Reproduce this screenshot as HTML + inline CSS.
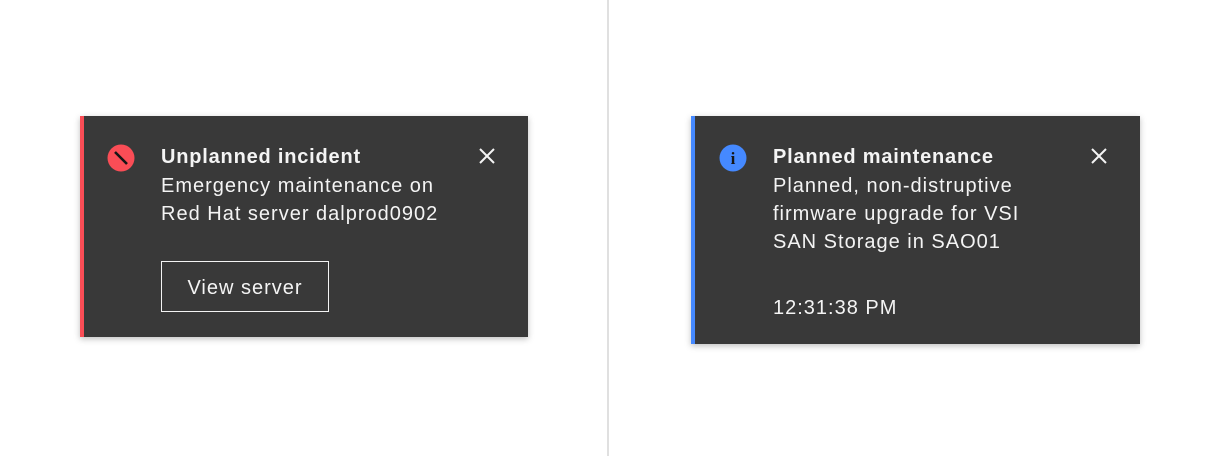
<!DOCTYPE html>
<html><head><style>
body{margin:0;width:1216px;height:456px;background:#fff;position:relative;overflow:hidden;font-family:"Liberation Sans",sans-serif;color:#f4f4f4}
.div{position:absolute;left:607px;top:0;width:2px;height:456px;background:#e0e0e0}
.card{position:absolute;background:#393939;box-shadow:0 2px 6px rgba(0,0,0,.25)}
.t{position:absolute;font-size:20px;line-height:28px;white-space:nowrap;letter-spacing:1px}
.b{font-weight:bold;letter-spacing:.8px}
.x{position:absolute;width:18px;height:18px}
</style></head><body>
<div class="div"></div>
<div class="card" style="left:80px;top:116px;width:448px;height:221px;border-left:4px solid #fa4d56;box-sizing:border-box"></div>
<svg style="position:absolute;left:107px;top:144px" width="28" height="28"><circle cx="14" cy="14" r="13.5" fill="#fa4d56"/><line x1="8" y1="8" x2="20" y2="20" stroke="#161616" stroke-width="2.6"/></svg>
<div class="t b" style="left:161px;top:143px">Unplanned incident</div>
<div class="t" style="left:161px;top:172px">Emergency maintenance on<br>Red Hat server dalprod0902</div>
<div class="t" style="left:161px;top:261px;width:168px;height:51px;border:1px solid #f4f4f4;box-sizing:border-box;line-height:53px;text-align:center">View server</div>
<svg class="x" style="left:478px;top:147px"><path d="M2 2L16 16M16 2L2 16" stroke="#f4f4f4" stroke-width="2"/></svg>

<div class="card" style="left:691px;top:116px;width:449px;height:228px;border-left:4px solid #4589ff;box-sizing:border-box"></div>
<svg style="position:absolute;left:719px;top:144px" width="28" height="28"><circle cx="14" cy="14" r="13.5" fill="#4589ff"/><text x="14" y="20" text-anchor="middle" font-family="Liberation Serif,serif" font-weight="bold" font-size="17" fill="#161616">i</text></svg>
<div class="t b" style="left:773px;top:143px">Planned maintenance</div>
<div class="t" style="left:773px;top:172px">Planned, non-distruptive<br>firmware upgrade for VSI<br>SAN Storage in SAO01</div>
<div class="t" style="left:773px;top:294px">12:31:38 PM</div>
<svg class="x" style="left:1090px;top:147px"><path d="M2 2L16 16M16 2L2 16" stroke="#f4f4f4" stroke-width="2"/></svg>
</body></html>
